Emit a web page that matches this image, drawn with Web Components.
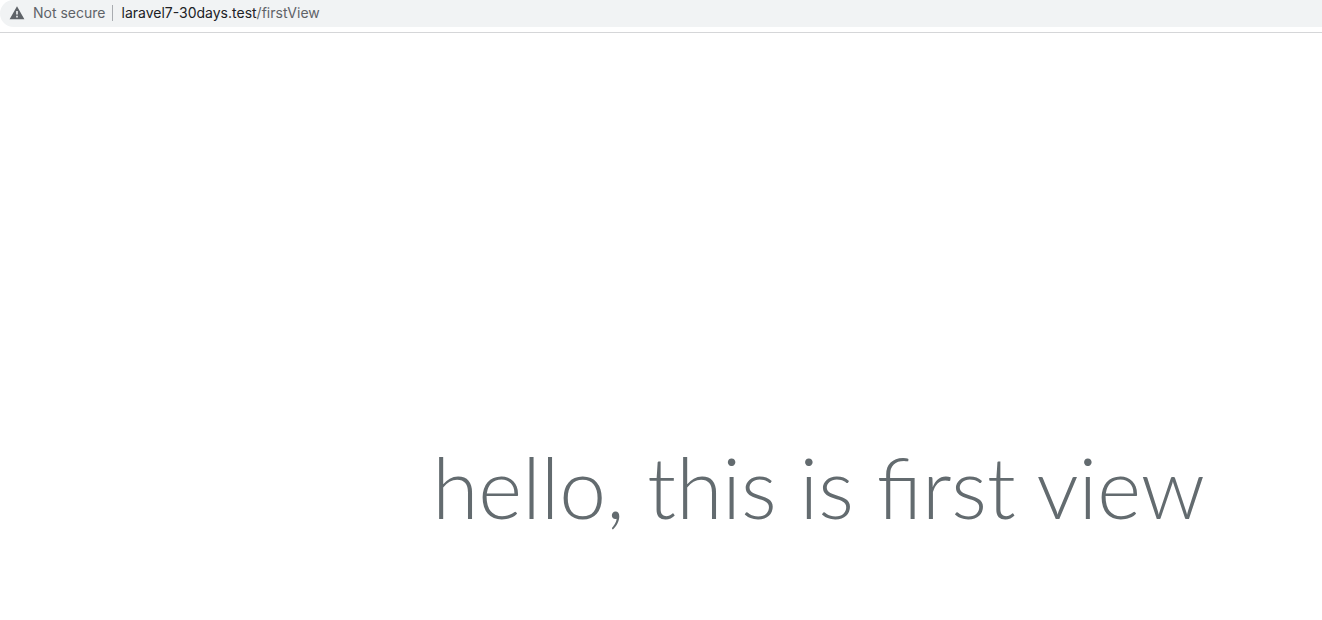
<!DOCTYPE html>
<html lang="en">
<head>
<meta charset="utf-8">
<title>First view</title>
<style>
html, body { margin: 0; background: #fff; }
</style>
</head>
<body>
<app-page></app-page>
<script>
const define = (name, html) => customElements.define(name, class extends HTMLElement {
  constructor() {
    super();
    this.attachShadow({ mode: "open" }).innerHTML = html;
  }
});

define("warning-icon", `
<style>
:host { display: block; width: 16px; height: 14px; color: #5f6368; }
svg { display: block; width: 100%; height: 100%; }
</style>
<svg viewBox="0 0 16 14" aria-hidden="true">
  <path fill="currentColor" fill-rule="evenodd" d="M8 .2 15.4 13.2H.6ZM7.2 5V8.6H8.8V5ZM7.2 9.8V11.4H8.8V9.8Z"/>
</svg>`);

define("address-bar", `
<style>
:host { display: block; padding-bottom: 5px; border-bottom: 1px solid #d5d6d8; background: #fff;
  font: 14px/25px Inter, Roboto, sans-serif; color: #5f6368; }
.field { display: flex; align-items: center; padding: 0 0 2px 9px;
  background: #f1f3f4; border-radius: 14px 0 0 14px; }
.status { margin-left: 8px; }
.rule { width: 1px; height: 16px; margin: 0 9px 0 6px; background: #a9acb0; }
a { color: inherit; text-decoration: none; }
.host { color: #202124; }
</style>
<div class="field">
  <warning-icon></warning-icon>
  <span class="status"><slot name="status"></slot></span>
  <span class="rule"></span>
  <a href="#"><span class="host"><slot name="host"></slot></span><slot name="path"></slot></a>
</div>`);

define("hero-title", `
<style>
:host { display: block; }
h1 { margin: 0; font: 300 84px/96px Lato, "Open Sans", sans-serif; color: #636b6f; text-align: center; white-space: nowrap; }
</style>
<h1><slot></slot></h1>`);

define("app-page", `
<style>
:host { display: flex; flex-direction: column; min-height: 100vh; overflow: hidden; }
main { flex: 1; display: flex; justify-content: center; align-items: flex-end; box-sizing: border-box;
  padding: 0 2px 85px 24%; }
</style>
<address-bar>
  <span slot="status">Not secure</span>
  <span slot="host">laravel7-30days.test</span>
  <span slot="path">/firstView</span>
</address-bar>
<main><hero-title>hello, this is first view</hero-title></main>`);
</script>
</body>
</html>
